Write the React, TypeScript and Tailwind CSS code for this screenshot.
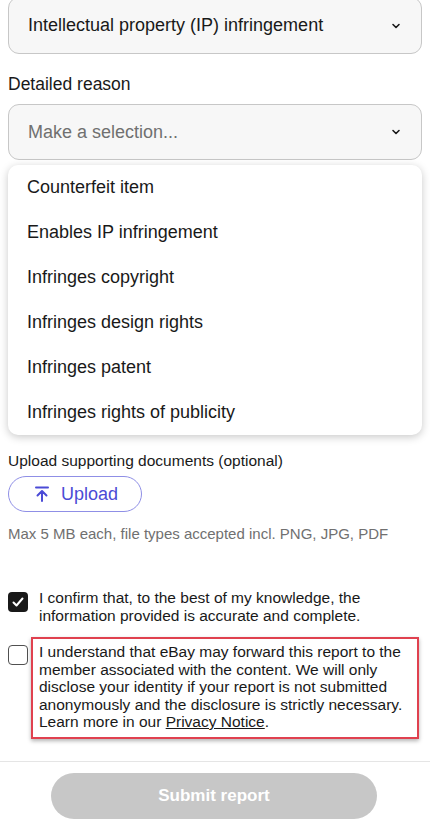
import React from 'react'

const reasons = [
  'Counterfeit item',
  'Enables IP infringement',
  'Infringes copyright',
  'Infringes design rights',
  'Infringes patent',
  'Infringes rights of publicity',
]

function Chevron() {
  return (
    <svg className="w-[12px] h-[12px] text-[#191919]" viewBox="0 0 12 12" fill="none" stroke="currentColor">
      <path d="M3 4.5L6 7.5l3-3" strokeWidth={1.6} strokeLinecap="round" strokeLinejoin="round" />
    </svg>
  )
}

export default function App() {
  return (
    <div className="w-[430px] h-[824px] overflow-hidden bg-white text-[#191919] font-['Liberation_Sans',Arial,sans-serif]">
      <div className="px-2">
        {/* category select (top cut off) */}
        <div className="-mt-[3px] h-[57px] flex items-center justify-between rounded-[11px] border border-[#c7c7c7] bg-[#f7f7f7] pl-[19px] pr-[19px]">
          <span className="text-[18px]">Intellectual property (IP) infringement</span>
          <Chevron />
        </div>

        <div className="mt-[20px] text-[17.5px] leading-[20px]">Detailed reason</div>

        <div className="mt-[10px] h-[56px] flex items-center justify-between rounded-[11px] border border-[#c7c7c7] bg-[#f7f7f7] pl-[19px] pr-[19px]">
          <span className="text-[18px] text-[#707070]">Make a selection...</span>
          <Chevron />
        </div>

        {/* open listbox */}
        <div className="mt-[5px] rounded-[10px] bg-white shadow-[0_2px_8px_rgba(0,0,0,0.22)]">
          {reasons.map((r) => (
            <div key={r} className="h-[45px] flex items-center pl-[19px] text-[18px]">
              {r}
            </div>
          ))}
        </div>

        <div className="mt-[17px] text-[15.5px] leading-[18px]">Upload supporting documents (optional)</div>

        <button className="mt-[6px] h-[36px] w-[134px] flex items-center gap-[10px] pl-[24px] rounded-full border border-[#8f8fe6] text-[#4b4bd6]">
          <svg className="w-[18px] h-[18px]" viewBox="0 0 18 18" fill="none" stroke="currentColor">
            <path d="M3 2.5h12" strokeWidth={2} strokeLinecap="round" />
            <path d="M9 16V6.5M4.5 10.5L9 6l4.5 4.5" strokeWidth={2} strokeLinecap="round" strokeLinejoin="round" />
          </svg>
          <span className="text-[18px]">Upload</span>
        </button>

        <div className="mt-[13px] text-[15px] leading-[18px] text-[#707070]">
          Max 5 MB each, file types accepted incl. PNG, JPG, PDF
        </div>

        <div className="mt-[46px] flex gap-[11px]">
          <div className="mt-[3px] w-[20px] h-[20px] shrink-0 rounded-[4px] bg-[#191919] flex items-center justify-center">
            <svg className="w-[14px] h-[14px]" viewBox="0 0 14 14" fill="none" stroke="white">
              <path d="M2.5 7.5l3 3 6-7" strokeWidth={2} strokeLinecap="round" strokeLinejoin="round" />
            </svg>
          </div>
          <p className="text-[15.5px] leading-[17.5px]">
            I confirm that, to the best of my knowledge, the information provided is accurate and complete.
          </p>
        </div>

        <div className="relative mt-[19px] flex gap-[11px]">
          <div className="mt-[2px] w-[20px] h-[20px] shrink-0 rounded-[4px] border-[1.5px] border-[#505050] bg-white" />
          <p className="text-[15.5px] leading-[17.5px] pr-[6px]">
            I understand that eBay may forward this report to the member associated with the content. We will only
            disclose your identity if your report is not submitted anonymously and the disclosure is strictly
            necessary. Learn more in our <span className="underline">Privacy Notice</span>.
          </p>
          {/* annotation frame */}
          <div className="absolute left-[23px] right-[3px] -top-[6px] -bottom-[8px] border-2 border-[#e0414f] shadow-[0_2px_4px_rgba(0,0,0,0.3)] pointer-events-none" />
        </div>
      </div>

      <div className="mt-[30px] border-t border-[#e5e5e5]" />

      <div className="pt-[11px] pl-[51px]">
        <button className="w-[326px] h-[46px] rounded-full bg-[#c7c7c7] text-white font-bold text-[17px]">
          Submit report
        </button>
      </div>
    </div>
  )
}
